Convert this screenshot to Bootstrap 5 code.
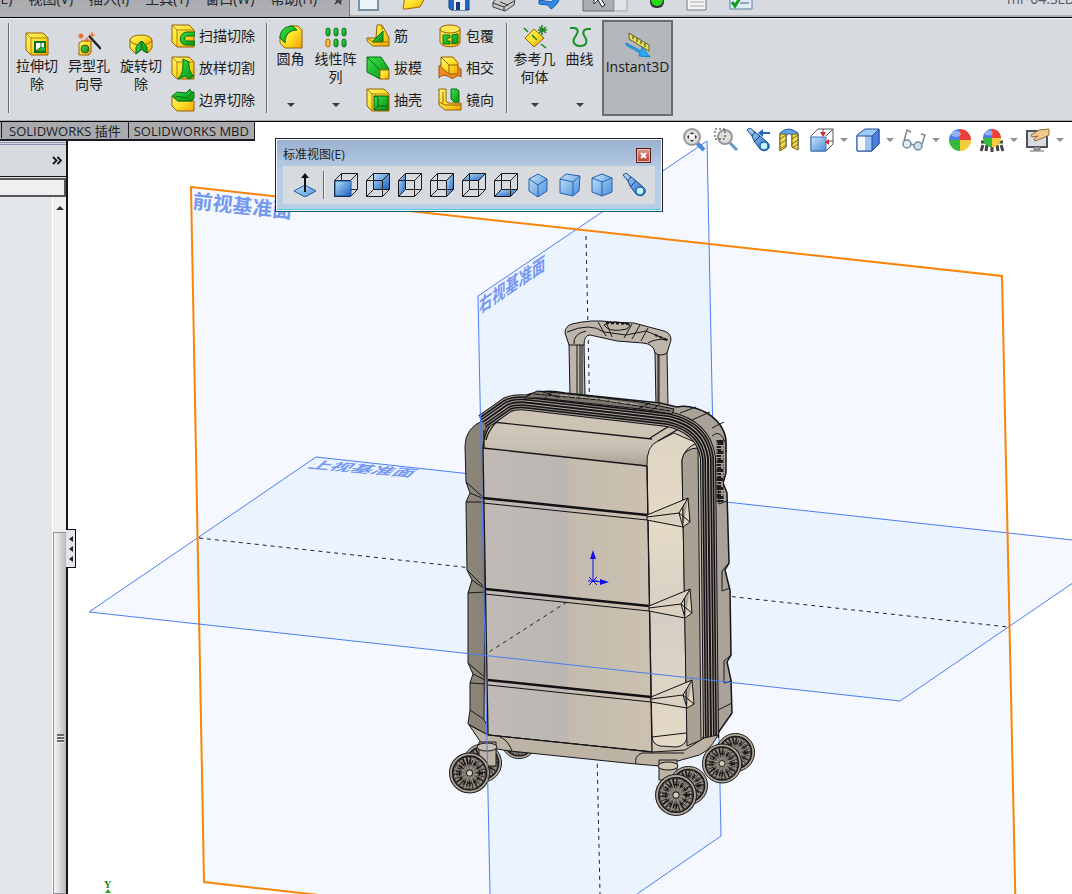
<!DOCTYPE html>
<html lang="zh-CN">
<head>
<meta charset="utf-8">
<meta name="viewport" content="width=device-width, initial-scale=1">
<title>SOLIDWORKS</title>
<link href="https://cdn.jsdelivr.net/npm/bootstrap@5.3.0/dist/css/bootstrap.min.css" rel="stylesheet">
<script src="https://cdn.jsdelivr.net/npm/bootstrap@5.3.0/dist/js/bootstrap.bundle.min.js"></script>
<style>
  body { font-family: "Open Sans", "Noto Sans CJK SC", sans-serif; font-size: 14px; line-height: 18px; color: #1c1c1c; background: #fff; }
  button { border: 0; background: none; padding: 0; color: inherit; font: inherit; line-height: inherit; }
  svg { display: block; flex: none; }
  .ico { width: 24px; height: 24px; }

  /* title bar with menus and quick access */
  .topbar { height: 18px; background: #d7dade; border-bottom: 1px solid #000; box-shadow: inset 0 -2px #b0b2b6; }
  .topbar .item { height: 32px; padding-bottom: 9px; }
  .menus { width: 350px; background: linear-gradient(#a3a4a8, #b1b3b6); border-right: 1px solid #77787b; gap: 16px; padding-right: 4px; }
  .menus a { color: #25272b; text-decoration: none; white-space: nowrap; }
  .quick { gap: 22px; padding-left: 8px; height: 32px; padding-bottom: 5px; }
  .doc-name { color: #55585c; width: 65px; white-space: nowrap; overflow: hidden; }

  /* command ribbon */
  .ribbon { height: 104px; background: #d7dade; border-bottom: 1px solid #000; box-shadow: inset 0 1px #f5f5f5, inset 0 -1px #aaa; padding: 2px 0 0 8px; }
  .rule { width: 2px; height: 90px; margin-top: 3px; background: #67696c; border-right: 1px solid #eceef0; flex: none; }
  .big { width: 52px; padding-top: 12px; }
  .big svg { margin-bottom: 1px; }
  .big.drop { width: 45px; padding-top: 5px; height: 92px; }
  .caret { width: 0; height: 0; border: 4px solid transparent; border-top-color: #3a3c3f; border-bottom: 0; }
  .big.drop .caret { margin-top: auto; margin-bottom: 5px; }
  .stack button { height: 32px; gap: 4px; white-space: nowrap; }
  .first-group { padding-left: 1px; }
  .cuts { margin: 0 11px 0 4px; }
  .instant { width: 71px; height: 96px; background: #b4b7bb; border: 2px solid #6b6e70; padding-top: 9px; }

  /* document tabs */
  .tabs { height: 19px; background: #aaabaf; border: solid #1b1c22; border-width: 0 1px 2px 0; font-size: 13px; padding-left: 1px; }
  .tabs button { border-left: 1px solid #1b1c22; padding: 0 7px; height: 16px; }
  .tabs button + button { padding: 0 5px; }

  /* feature tree side panel */
  .side { width: 68px; border-right: 2px solid #15161a; background: #e2e6eb; padding-top: 20px; flex: none; }
  .side-head { height: 35px; background: #d7dade; border-top: 3px double #8c8cae; border-bottom: 1px solid #15161a; padding-right: 4px; }
  .side input { height: 19px; margin-top: 1px; border: 2px solid #55575a; border-left: 0; background: #efefef; width: 100%; border-radius: 0; }
  .scroll { width: 14px; background: #efefef; border-left: 1px solid #fff; }
  .thumb { height: 52%; background: linear-gradient(90deg, #f4f4f4, #dcdcde 45%, #b7b8bd); border: 1px solid #8f9195; border-right: 0; padding-top: 52px; }
  .grip { width: 7px; height: 9px; background: repeating-linear-gradient(#666 0 2px, #eee 2px 3px); }
  .collapse-tab { left: 66px; top: 407px; width: 10px; height: 39px; background: #e2e6eb; border: 1px solid #111; border-left: 0; z-index: 2; }
  .collapse-tab i { border: 3px solid transparent; border-right: 4px solid #222; border-left: 0; }

  /* floating palette and heads-up bar */
  .palette { left: 207px; top: 16px; width: 388px; height: 74px; background: linear-gradient(#98b1cf, #b8cde6 45%); border: 1px solid #222; border-bottom-color: #155b70; box-shadow: inset 0 0 0 1px #f0f6fc, inset 0 -2px #52cbe4; padding: 7px 7px 6px; font-size: 12px; }
  .palette .close { width: 15px; height: 15px; background: linear-gradient(#dc9a92, #b3402f); border: 1px solid #581d16; box-shadow: inset 0 0 0 1px #e6b8b2; }
  .strip { background: #d7dade; height: 38px; padding-left: 10px; gap: 8px; margin-top: 2px; }
  .strip .rule { height: 28px; margin: 0 1px 0 -2px; }
  .hud { top: 6px; right: 0; }
  .hud button { width: 32px; gap: 6px; }
  .hud button.has-menu { width: 46px; }
  .hud .caret { border-top-color: #909090; }
  .plane-label { font: bold 20px "Noto Sans CJK SC", sans-serif; fill: #7598f2; }
  .label-right { font-size: 16px; }
  .label-top { font-size: 15px; }
  .axis-name { font: bold 10px "Liberation Serif", serif; fill: #138a13; }
</style>
</head>
<body class="vh-100 d-flex flex-column overflow-hidden">

<!-- shared gradients and icon symbols -->
<svg width="0" height="0" class="position-absolute" aria-hidden="true">
  <defs>
    <linearGradient id="gy" x1="0" y1="0" x2="1" y2="1"><stop stop-color="#fff36a"/><stop offset=".5" stop-color="#ffe12a"/><stop offset="1" stop-color="#f2a200"/></linearGradient>
    <linearGradient id="gg" x1="0" y1="0" x2="1" y2="1"><stop stop-color="#3ce04c"/><stop offset="1" stop-color="#069312"/></linearGradient>
    <linearGradient id="gb" x1="0" y1="0" x2="1" y2="1"><stop stop-color="#b5e0fb"/><stop offset="1" stop-color="#1c60bd"/></linearGradient>
    <linearGradient id="gl" x1="0" y1="0" x2="1" y2="1"><stop stop-color="#c6e4fa"/><stop offset="1" stop-color="#4b8edc"/></linearGradient>
    <symbol id="box" viewBox="0 0 24 24"><path d="M1 1h17l5 5v17H6L1 18z" fill="url(#gy)" stroke="#94600a"/><path d="M1 1l5 5h17M6 6v17" fill="none" stroke="#b57d0e"/></symbol>
    <symbol id="wire" viewBox="0 0 24 24"><path d="M.5 7.500h16v16H.5zM7.500.5h16v16h-16zM.5 7.500l7-7M16.500 7.500l7-7M16.500 23.500l7-7M.5 23.500l7-7" fill="none" stroke="#1a1a1a"/></symbol>
    <symbol id="scope" viewBox="0 0 24 24"><path d="M1 2l3-2 5 4 4 3 8 7c6 5-1 12-7 7L8 13 6 8z" fill="url(#gb)" stroke="#174a8c"/><path d="M9 4L6 8M14 8l-6 6" stroke="#0d3b7a"/><circle cx="18" cy="18" r="4" fill="#c8f3ff" stroke="#2271bb" stroke-width="1.500"/></symbol>
    <symbol id="ball" viewBox="0 0 24 24"><path d="M12 12V1a11 11 0 0 0-11 11z" fill="#4a7ee8"/><path d="M12 12V1a11 11 0 0 1 11 11z" fill="#ea4038"/><path d="M12 12H1a11 11 0 0 0 11 11z" fill="#35ba3c"/><path d="M12 12h11a11 11 0 0 1-11 11z" fill="#f2cd3c"/><ellipse cx="8" cy="6" rx="5" ry="3" fill="#fff" opacity=".4"/></symbol>
    <symbol id="hub" viewBox="-21 -21 42 42"><circle r="19.500" fill="#b0a799" stroke="#1a1a1c"/><circle r="16.500" fill="#7a746b" stroke="#17171a" stroke-width="1.500"/><circle r="11" fill="none" stroke="#1b1b1e" stroke-width="9" stroke-dasharray="1.400 1.300"/><circle r="14" fill="none" stroke="#a39c90" stroke-width="1.500" stroke-dasharray="2 2"/><circle r="10" fill="none" stroke="#101012"/><circle r="7" fill="none" stroke="#9b9488" stroke-dasharray="2 2"/><path d="M-15-5L15 5M-15 5L15-5M-5-15L5 15M-5 15L5-15M-11-11l22 22M-11 11l22-22" stroke="#979084"/><circle r="3" fill="#d6ccbc" stroke="#222"/></symbol>
  </defs>
</svg>

<header class="topbar d-flex align-items-end overflow-hidden flex-shrink-0">
  <nav class="menus item d-flex align-items-end justify-content-end flex-shrink-0 overflow-hidden" aria-label="菜单">
    <a href="#">编辑(E)</a><a href="#">视图(V)</a><a href="#">插入(I)</a><a href="#">工具(T)</a><a href="#">窗口(W)</a><a href="#">帮助(H)</a>
    <svg width="12" height="16" viewBox="0 0 14 16"><path d="M2 7h5l3-3 2 2-3 3v4l-3-3-4 3 3-4z" fill="#555" stroke="#222"/></svg>
  </nav>
  <div class="quick d-flex align-items-end flex-grow-1">
    <button aria-label="新建"><svg width="22" height="22" viewBox="0 0 22 22"><path d="M1 0h19v20H1z" fill="#e9f3fa" stroke="#7890a8" stroke-width="2"/></svg></button>
    <button aria-label="打开"><svg width="24" height="22" viewBox="0 0 24 22"><path d="M1 19L3 6h7l13 2-5 9-14 2z" fill="url(#gy)" stroke="#9a6810"/></svg></button>
    <button aria-label="保存"><svg width="22" height="22" viewBox="0 0 22 22"><path d="M1 0h20v20H3l-2-2z" fill="#2367ca" stroke="#17438a"/><path d="M6 10h11v10H6z" fill="#e9eef5"/><path d="M8 12h4v8H8z" fill="#163a7c"/></svg></button>
    <button aria-label="打印"><svg width="24" height="22" viewBox="0 0 24 22"><path d="M1 12l9-8 13 5-1 6-9 6-12-4z" fill="#c9c9c9" stroke="#444"/><path d="M1 13l11 4 10-6M8 12l8 3M12 17v4" stroke="#333" fill="none"/></svg></button>
    <button aria-label="撤消"><svg width="22" height="22" viewBox="0 0 22 22"><path d="M1 10l12 2c3-2 4-5 4-8h5c0 7-4 12-9 15l-3-4-9-1z" fill="#2d8be8" stroke="#1757a6"/></svg></button>
    <button aria-label="选择"><svg width="46" height="24" viewBox="0 0 46 24"><path d="M1 0h31v23H1z" fill="#aaadb1" stroke="#63666a"/><path d="M32 0h13v23H32z" fill="#e2e4e7" stroke="#a0a3a7"/><path d="M12 2v14l4-4 4 7 3-2-4-6h5z" fill="#fff" stroke="#222"/></svg></button>
    <button aria-label="重建模型" class="ms-n2"><svg width="14" height="24" viewBox="0 0 14 24"><rect width="14" height="20" rx="6" fill="#30343a"/><circle cx="7" cy="12" r="6" fill="#25d818"/><circle cx="6" cy="9" r="2" fill="#b9ff9e"/></svg></button>
    <button aria-label="文件属性"><svg width="21" height="22" viewBox="0 0 21 22"><path d="M1 0h19v20H1z" fill="#f4f4f4" stroke="#777"/><path d="M4 8h14M4 12h14M4 16h14" stroke="#aaa"/></svg></button>
    <button aria-label="选项"><svg width="24" height="22" viewBox="0 0 24 22"><path d="M1 0h22v19H1z" fill="#deeefa" stroke="#5c7fa0"/><path d="M11 13h9" stroke="#557"/><path d="M3 12l3 4 5-8" fill="none" stroke="#12a01a" stroke-width="3"/></svg></button>
  </div>
  <div class="doc-name item d-flex align-items-end">mr-04.SLDPRT</div>
</header>

<section class="ribbon d-flex flex-shrink-0" aria-label="特征">
  <div class="rule"></div>
  <div class="first-group d-flex">
    <button class="big d-flex flex-column align-items-center"><svg class="ico"><use href="#box"/><path d="M10 10h10v10H10z" fill="#fff" stroke="#0b6d16" stroke-width="2"/><path d="M11 19l5-4h4v4z" fill="#21b52f"/><path d="M11 19l5-4v-4" stroke="#0b6d16" fill="none"/></svg>拉伸切<br>除</button>
    <button class="big d-flex flex-column align-items-center"><svg class="ico"><path d="M2 11l3-2h9v11l-2 3H2z" fill="url(#gy)" stroke="#94600a"/><circle cx="8" cy="17" r="4" fill="url(#gg)" stroke="#654208"/><path d="M12 4l12 13" stroke="#222" stroke-width="2.500"/><path d="M1 4h6M4 1v6M2 2l4 4M6 2L2 6M12 3h6M15 0v6M7 8h5M10 5v5" stroke="#e85a10"/></svg>异型孔<br>向导</button>
    <button class="big d-flex flex-column align-items-center"><svg class="ico"><path d="M1 8v8l6 6 6-11 6 10 4-5V8z" fill="url(#gy)" stroke="#94600a"/><ellipse cx="12" cy="8" rx="11" ry="5" fill="url(#gy)" stroke="#94600a"/><path d="M7 15l5-6v9l-5 4zM13 9l5 6v6l-5-3z" fill="url(#gg)" stroke="#09611a"/></svg>旋转切<br>除</button>
  </div>
  <div class="stack cuts d-flex flex-column">
    <button class="d-flex align-items-center"><svg class="ico"><use href="#box"/><path d="M24 8h-8c-9 1-9 13 0 13h8v-4h-8c-3 0-3-5 0-5h8z" fill="url(#gg)" stroke="#086d16"/></svg>扫描切除</button>
    <button class="d-flex align-items-center"><svg class="ico"><use href="#box"/><path d="M12 3l6 3c0 7 1 11 5 14l-5 3-4-3-7 3c5-6 5-10 5-20z" fill="url(#gg)" stroke="#086d16"/></svg>放样切割</button>
    <button class="d-flex align-items-center"><svg class="ico"><path d="M1 8l6 5h16v10H6l-5-5z" fill="url(#gy)" stroke="#94600a"/><path d="M1 8l5-4 9 1 4-4 1 3h3v6l-2 3H7z" fill="url(#gg)" stroke="#086d16"/><path d="M4 8l12 2 6-6" stroke="#086d16" fill="none"/></svg>边界切除</button>
  </div>
  <div class="rule"></div>
  <button class="big drop d-flex flex-column align-items-center"><svg class="ico"><path d="M1 11L11 1h8l4 4v18H6l-5-5z" fill="url(#gy)" stroke="#94600a"/><path d="M1 13C1 5 6 1 14 1l4 4C11 5 6 9 6 18z" fill="url(#gg)" stroke="#087016"/></svg>圆角<span class="caret"></span></button>
  <button class="big drop d-flex flex-column align-items-center"><svg class="ico"><g fill="url(#gg)" stroke="#08751c"><rect x="2" y="3" width="4" height="8" rx="2"/><rect x="10" y="3" width="4" height="8" rx="2"/><rect x="18" y="3" width="4" height="8" rx="2"/><rect x="10" y="14" width="4" height="8" rx="2"/><rect x="18" y="14" width="4" height="8" rx="2"/></g><rect x="2" y="14" width="4" height="8" rx="2" fill="#ffc634" stroke="#a96300"/></svg>线性阵<br>列<span class="caret"></span></button>
  <div class="stack d-flex flex-column ms-2 me-3">
    <button class="d-flex align-items-center"><svg class="ico"><path d="M11 1h5l7 13v8H7l-6-5v-3h9z" fill="url(#gy)" stroke="#94600a"/><path d="M6 18L17 7v11z" fill="url(#gg)" stroke="#086d16"/><path d="M16 1v5M1 14l6 4h16" fill="none" stroke="#a26d0c"/></svg>筋</button>
    <button class="d-flex align-items-center"><svg class="ico"><path d="M1 1h14l8 12-9 10-13-7z" fill="url(#gg)" stroke="#086d16"/><path d="M1 1l13 13" stroke="#086d16"/><path d="M14 14h9v9h-9z" fill="url(#gy)" stroke="#94600a"/></svg>拔模</button>
    <button class="d-flex align-items-center"><svg class="ico"><use href="#box"/><path d="M8 8h14v14H8z" fill="url(#gg)" stroke="#085d13"/><path d="M8 8l4 1v9l-4 4M12 18h10" fill="none" stroke="#085d13"/></svg>抽壳</button>
  </div>
  <div class="stack d-flex flex-column me-2 pe-1">
    <button class="d-flex align-items-center"><svg class="ico"><path d="M2 5v14c3 5 18 5 20 0V5z" fill="url(#gy)" stroke="#94600a"/><ellipse cx="12" cy="5" rx="10" ry="4" fill="#ffe95a" stroke="#94600a"/><path d="M5 11h7v3H9v3h3v3H5zM14 11l6-1v9l-6 1z" fill="url(#gg)" stroke="#086d16"/></svg>包覆</button>
    <button class="d-flex align-items-center"><svg class="ico"><path d="M1 10c5-4 8 6 12 2s6-2 10 1v8c-4-4-7 3-10 1S5 17 1 22z" fill="#f48a27" stroke="#9c4d0b"/><path d="M3 1h12l5 6v11h-9l-8-7z" fill="url(#gy)" stroke="#94600a"/><path d="M3 1l8 8h9M11 9v9" fill="none" stroke="#94600a"/></svg>相交</button>
    <button class="d-flex align-items-center"><svg class="ico"><path d="M1 1h7v12l2 2h13v7H7l-6-5z" fill="url(#gy)" stroke="#94600a"/><path d="M13 1h6l2 2v11h-5l-3-3z" fill="url(#gg)" stroke="#086d16"/><path d="M1 14l6 3h16M5 4v11" fill="none" stroke="#94600a"/></svg>镜向</button>
  </div>
  <div class="rule"></div>
  <button class="big drop d-flex flex-column align-items-center ms-1"><svg class="ico"><path d="M11 4l10 9-10 9-9-9z" fill="url(#gy)" stroke="#94600a"/><path d="M1 3l4 4M9 10l5 5M18 19l5 4M15 5h9M19 0v10M16 2l7 6M23 2l-7 6" stroke="#13841f" stroke-width="1.500"/></svg>参考几<br>何体<span class="caret"></span></button>
  <button class="big drop d-flex flex-column align-items-center"><svg class="ico"><path d="M2 3h5c5 2 2 6 0 9-4 6 1 9 5 9 8 0 7-6 5-9-3-4-2-8 3-8h3" fill="none" stroke="#159128" stroke-width="2"/></svg>曲线<span class="caret"></span></button>
  <button class="instant d-flex flex-column align-items-center"><svg width="26" height="27" viewBox="0 0 26 27"><path d="M4 2l20 12v6L4 8z" fill="#e5df52" stroke="#666039"/><path d="M8 5v3M12 7v4M16 10v3M20 12v4" stroke="#333"/><path d="M1 12l15 8 1-4 8 10-11-1 1-3L1 14z" fill="#2da8f3" stroke="#1682c6"/></svg>Instant3D</button>
</section>

<main class="d-flex flex-grow-1 position-relative overflow-hidden">
  <div class="tabs d-flex position-absolute top-0 start-0 z-3">
    <button>SOLIDWORKS 插件</button><button>SOLIDWORKS MBD</button>
  </div>

  <aside class="side d-flex flex-column">
    <div class="side-head d-flex align-items-center justify-content-end"><button aria-label="展开"><svg width="10" height="9" viewBox="0 0 11 10"><path d="M1 1l4 4-4 4M6 1l4 4-4 4" fill="none" stroke="#111" stroke-width="2"/></svg></button></div>
    <input type="text" aria-label="过滤">
    <div class="d-flex justify-content-end flex-grow-1">
      <div class="scroll d-flex flex-column align-items-center">
        <svg width="8" height="6" viewBox="0 0 8 6" class="mt-2 mb-auto"><path d="M0 5l4-4 4 4z" fill="#333"/></svg>
        <div class="thumb w-100 d-flex align-items-center justify-content-center"><div class="grip"></div></div>
      </div>
    </div>
  </aside>
  <button class="collapse-tab position-absolute d-flex flex-column align-items-center justify-content-center gap-1" aria-label="收起面板"><i></i><i></i><i></i></button>

  <div class="flex-grow-1 position-relative overflow-hidden">
    <svg class="w-100 h-100" viewBox="68 122 1004 772" preserveAspectRatio="xMinYMin slice" role="img" aria-label="行李箱模型">
      <defs>
        <linearGradient id="front"><stop stop-color="#c1bab6"/><stop offset=".5" stop-color="#bbb6b2"/><stop offset=".51" stop-color="#c4bbae"/><stop offset="1" stop-color="#ccc1b0"/></linearGradient>
        <linearGradient id="bevel" x1="0" y1="0" x2="0" y2="1"><stop stop-color="#d3cabe"/><stop offset=".6" stop-color="#c8bfb3"/><stop offset="1" stop-color="#a9a094"/></linearGradient>
        <linearGradient id="pillar" x1="0" y1="0" x2="0" y2="1"><stop stop-color="#ded4c2"/><stop offset=".3" stop-color="#e4dac6"/><stop offset=".6" stop-color="#d6cec4"/><stop offset="1" stop-color="#e5dac7"/></linearGradient>
        <linearGradient id="flank"><stop stop-color="#8d867b"/><stop offset="1" stop-color="#766f65"/></linearGradient>
        <path id="zip" d="M483 422L507 405Q515 401 530 403L668 419Q704 427 708 458L711 738"/>
      </defs>
      <!-- reference planes -->
      <g fill="#3f90ff" fill-opacity=".05">
        <path d="M191 187L1002 276 1017 974 204 882z"/>
        <path d="M478 296L707 141 721 836 491 995z"/>
        <path d="M89 612L316 457 1127 546 900 701z"/>
      </g>
      <g fill="none" stroke="#4c7df2">
        <path d="M478 296L707 141 721 836 491 995M89 612L316 457 1127 546 900 701"/>
        <path d="M191 187L1002 276 1017 974 204 882z" stroke="#f98407" stroke-width="2"/>
      </g>
      <g fill="none" stroke="#222" stroke-dasharray="4 4"><path d="M586 236L600 894M199 538L1008 627"/></g>
      <text class="plane-label" transform="translate(192 208) rotate(6)">前视基准面</text>
      <text class="plane-label label-right" transform="translate(479 314) rotate(-34) skewX(-34)">右视基准面</text>
      <text class="plane-label label-top" transform="translate(307 468) rotate(49) skewY(-44)">上视基准面</text>

      <!-- telescopic handle -->
      <g stroke="#15151a" fill="#bdb5aa">
        <path d="M569 344h15l1 52h-15zM655 352h12l1 54h-12z"/>
        <path d="M577 345v50M580 345v50M582 345v50M658 353v50M659 353v52" fill="none"/>
        <path d="M565 333Q565 326 572 324Q592 319 612 322L634 323 664 331Q671 333 671 340L667 353Q661 357 655 353Q654 344 643 343L617 341 590 335Q584 335 584 345H569z"/>
        <path d="M567 332Q590 322 604 332L626 335 646 331 668 340M574 344q-1-10 12-13M598 322l8 14M606 322l6 15M632 324l-8 14M640 325l-8 14M648 328l-7 13M604 325q10-6 26 0l-3 4q-14 3-20-1zM648 343q8-5 19-3" fill="none"/>
        <path d="M606 323L630 324M655 335l12 5" fill="none" stroke-width="2" stroke-dasharray="3 2"/>
      </g>

      <!-- wheels behind the shell -->
      <use href="#hub" x="500" y="722" width="38" height="38"/>
      <use href="#hub" x="715" y="731" width="41" height="43"/>
      <use href="#hub" x="701" y="742" width="42" height="43"/>
      <use href="#hub" x="462" y="742" width="41" height="42"/>

      <!-- rear shell -->
      <path d="M480 424Q500 404 530 394Q545 389 565 393L660 403 677 407Q690 404 707 413Q724 424 726 440V473L723 483 727 493 729 563 725 570 730 590 731 655 727 662 731 680 732 713 718 733 700 750 560 700z" fill="#aaa299" stroke="#16161a" stroke-width="1.500"/>
      <path d="M729 563l-7 8v20l8-3M731 655l-7 6v22l8-2M723 483l-5 5 1 16 8-3M692 420l18-8M680 413l16-6M712 428l12-6M718 710l14-7" fill="none" stroke="#16161a"/>
      <path d="M712 436q8-8 14 8v8" fill="none" stroke="#16161a"/>
      <path d="M720 440v62" stroke="#1b1b20" stroke-width="7" stroke-dasharray="5 1 2 1"/>
      <path d="M722 446v50" stroke="#99928a" stroke-width="2" stroke-dasharray="5 4"/>
      <path d="M717 442v60" stroke="#99928a" stroke-dasharray="3 5"/>

      <!-- left flank -->
      <path d="M484 420Q465 428 465 446L466 482 470 493 466 502 467 570 472 580 468 593 468 663 473 674 470 683 470 710 468 724 488 735 560 740 540 430z" fill="url(#flank)" stroke="#16161a"/>
      <path d="M466 482L484 498M470 493L484 499M466 502H484M467 570L485 588M472 580L485 589M468 593L485 592M468 663L487 679M473 674L487 681M470 683L487 684M470 710L488 722" fill="none" stroke="#16161a"/>

      <!-- top shell and front panel -->
      <path d="M486 425Q495 408 515 404L672 423Q700 432 701 452L704 735Q700 748 688 750L660 758 500 745 484 720z" fill="#cdc3b5" stroke="#16161a"/>
      <path d="M483 448Q484 426 496 421L652 438Q646 446 647 466z" fill="url(#bevel)"/>
      <path d="M483 448L647 466 651 752 488 735z" fill="url(#front)"/>
      <path d="M647 466Q646 446 658 441L674 433 697 443Q684 448 682 460L687 737Q686 746 676 747L660 746Q652 744 652 736z" fill="url(#pillar)" stroke="#16161a"/>
      <path d="M682 460Q684 448 698 448L701 740 687 746z" fill="#aaa195" stroke="#16161a"/>
      <path d="M483 448Q485 418 515 407M486 440Q490 424 510 411M493 422L652 439M483 448L647 466M647 466L652 752M483 448L488 735M650 438L674 423M658 441L682 427M697 443L701 438M488 735L652 752M484 430v18" fill="none" stroke="#16161a" stroke-width="1.300"/>

      <!-- zipper band: nested strokes give parallel seams -->
      <g fill="none" stroke-linejoin="round">
        <use href="#zip" stroke="#111116" stroke-width="16"/>
        <use href="#zip" stroke="#aca498" stroke-width="14"/>
        <use href="#zip" stroke="#111116" stroke-width="12"/>
        <use href="#zip" stroke="#8c857b" stroke-width="9"/>
        <use href="#zip" stroke="#111116" stroke-width="7"/>
        <use href="#zip" stroke="#b4ac9f" stroke-width="4"/>
        <use href="#zip" stroke="#15151a" stroke-width="2"/>
      </g>
      <path d="M524 398L537 391 560 393 640 402 674 409 672 414 640 409 540 398z" fill="#7c766e" stroke="#111"/>
      <path d="M534 394L600 400 670 411M540 391l20 7M552 392l-8 7M650 403l-12 6M660 404l-10 7" fill="none" stroke="#111" stroke-dasharray="6 1"/>
      <path d="M560 395L600 399 640 405" fill="none" stroke="#b8b0a4" stroke-dasharray="8 2"/>

      <!-- ribs -->
      <g fill="none" stroke="#111115">
        <path d="M483 498L647 515M485 589L649 606M488 680L651 697" stroke-width="2.500"/>
        <path d="M483 503L647 520M485 594L649 611M488 685L651 702"/>
      </g>
      <g fill="#dcd0be" stroke="#111115" stroke-linejoin="round">
        <path d="M647 515L688 498 690 522 683 527 647 520zM688 498L679 513 683 527M679 513L647 517M679 513l11 9"/>
        <path d="M649 606L690 589 692 613 685 618 649 611zM690 589L681 604 685 618M681 604L649 608M681 604l11 9"/>
        <path d="M651 697L692 680 694 704 687 708 651 702zM692 680L683 695 687 708M683 695L651 699M683 695l11 9"/>
      </g>
      <path d="M652 737L686 733" stroke="#111"/>

      <!-- lower shell and castors -->
      <path d="M469 725L488 735 652 752 685 750 704 738 718 735Q708 755 692 757L660 766 636 764 510 751 484 747Z" fill="#bdb3a5" stroke="#16161a"/>
      <path d="M488 735L652 752M500 737q8 3 12 14M636 764q-2-8 6-11h42" fill="none" stroke="#16161a"/>
      <path d="M479 742h17v24h-17zM659 760h18v20h-18z" fill="#bdb3a5" stroke="#16161a"/>
      <ellipse cx="487" cy="747" rx="10" ry="4" fill="#cabfb0" stroke="#16161a"/>
      <ellipse cx="668" cy="766" rx="10" ry="4" fill="#d0c5b5" stroke="#16161a"/>
      <use href="#hub" x="448" y="751" width="43" height="44"/>
      <use href="#hub" x="668" y="764" width="41" height="43"/>
      <use href="#hub" x="654" y="773" width="44" height="44"/>

      <!-- plane edges in front of the model, origin marker -->
      <path d="M478 296L490 894M89 612L900 701" fill="none" stroke="#4c7df2"/>
      <path d="M567 602L489 652" stroke="#222" stroke-dasharray="4 4"/>
      <path d="M593 581V556M593 581l9 1M589 577l8 8M597 577l-8 8M588 581h10" stroke="#1010f0"/>
      <path d="M590 559l3-9 3 9zM600 579l9 3-9 3z" fill="#1010f0"/>
      <text class="axis-name" x="104" y="888">Y</text>
      <path d="M105 893l3-4 3 4z" fill="#28a828"/>
    </svg>

    <div class="hud position-absolute d-flex align-items-center">
      <button aria-label="整屏显示全图"><svg class="ico"><path d="M15 15l7 7" stroke="#4a88d6" stroke-width="4"/><circle cx="10" cy="9" r="8" fill="#ddd" stroke="#999" stroke-width="2"/><path d="M10 4l-2 2h4zM10 14l-2-2h4zM5 9l2-2v4zM15 9l-2-2v4z" fill="#333"/><path d="M8 7h4v4H8z" fill="#f7f7f7"/></svg></button>
      <button aria-label="局部放大"><svg class="ico"><path d="M15 14l8 8" stroke="#6497ce" stroke-width="3"/><circle cx="11" cy="9" r="7" fill="#ddd" stroke="#999" stroke-width="2"/><path d="M1 1h10v10H1z" fill="none" stroke="#333" stroke-dasharray="2 2"/></svg></button>
      <button aria-label="上一视图"><svg class="ico"><use href="#scope"/><path d="M24 5h-9" stroke="#2466b8" stroke-width="2"/><path d="M17 1l-5 4 5 4z" fill="#2466b8"/></svg></button>
      <button aria-label="剖面视图"><svg class="ico"><path d="M2 5q8-8 18 0v16l-6-2V7q-3-3-6 0v12l-6 3z" fill="#5fa6e8" stroke="#275c9b"/><path d="M2 6h6v13l-6 4zM14 6h6v16l-6-3z" fill="#f5dc4f" stroke="#725d16"/><path d="M2 11l6-4M2 16l6-4M2 21l6-4M14 11l6-4M14 16l6-4M14 20l6-4" stroke="#806d16"/></svg></button>
      <button class="has-menu d-flex align-items-center" aria-label="视图定向"><svg class="ico"><path d="M1 8l7-7h15v15l-7 7H1z" fill="#fff" stroke="#555"/><path d="M1 9h15v14H1z" fill="url(#gl)" stroke="#3677c2"/><path d="M16 8l7-7M13 1v5M23 13h-5" stroke="#555"/><path d="M10 4h6l-3 5zM19 11v6l-4-3z" fill="#d32a27"/></svg><span class="caret"></span></button>
      <button class="has-menu d-flex align-items-center" aria-label="显示样式"><svg class="ico"><path d="M1 7l8-6h14v15l-7 7H1z" fill="#9ccbf5" stroke="#274f9a"/><path d="M1 8h8v15H1z" fill="#f5f9fe"/><path d="M9 8h7v15H9z" fill="#9ac5f2"/><path d="M16 8l7-7v15l-7 7z" fill="#4a7fe0" stroke="#274f9a"/><path d="M1 8h15M1 8v15h15" fill="none" stroke="#274f9a"/></svg><span class="caret"></span></button>
      <button class="has-menu d-flex align-items-center" aria-label="隐藏/显示项目"><svg class="ico"><circle cx="5" cy="16" r="4" fill="#e2f0fa" stroke="#7a8790" stroke-width="1.500"/><circle cx="16" cy="18" r="4" fill="#c7e0f5" stroke="#7a8790" stroke-width="1.500"/><path d="M2 13L5 2l4 2M20 16l3-9-4-1M9 16l3 1" fill="none" stroke="#7a8790" stroke-width="1.500"/></svg><span class="caret"></span></button>
      <button aria-label="编辑外观"><svg class="ico"><use href="#ball"/></svg></button>
      <button class="has-menu d-flex align-items-center" aria-label="应用布景"><svg class="ico"><path d="M1 23l2-6M6 23l1-6M12 24v-5M18 23l-1-6M23 23l-2-6M1 14h22" stroke="#444" stroke-width="3"/><use href="#ball" x="2" width="20" height="20"/></svg><span class="caret"></span></button>
      <button class="has-menu d-flex align-items-center" aria-label="视图设定"><svg class="ico"><path d="M1 3h20v16H1z" fill="#d9dde1" stroke="#4d535a" stroke-width="2"/><path d="M8 19h6v3H8zM4 23h14" fill="#aaa" stroke="#666"/><path d="M5 7l8-5 10-1v6l-6 3-8 3-1-2 4-3-6 1z" fill="#f2c98e" stroke="#936a37"/></svg><span class="caret"></span></button>
    </div>

    <div class="palette position-absolute d-flex flex-column" role="toolbar" aria-label="标准视图">
      <div class="d-flex justify-content-between align-items-center">
        <span>标准视图(E)</span>
        <button class="close d-flex align-items-center justify-content-center me-1" aria-label="关闭"><svg width="7" height="7" viewBox="0 0 7 7"><path d="M1 1l5 5M6 1L1 6" stroke="#fff" stroke-width="2"/></svg></button>
      </div>
      <div class="strip d-flex align-items-center">
        <button aria-label="正视于"><svg class="ico"><path d="M1 18l11-6 11 6-11 6z" fill="url(#gl)" stroke="#255998"/><path d="M12 19V4" stroke="#111" stroke-width="2"/><path d="M8 5l4-5 4 5z" fill="#111"/></svg></button>
        <span class="rule"></span>
        <button aria-label="前视"><svg class="ico"><use href="#wire"/><path d="M1 8h16v15H1z" fill="url(#gb)" stroke="#174f9b"/></svg></button>
        <button aria-label="后视"><svg class="ico"><path d="M7 1h16v15H7z" fill="url(#gb)"/><use href="#wire"/></svg></button>
        <button aria-label="左视"><svg class="ico"><path d="M1 8l6-7v15l-6 7z" fill="url(#gb)"/><use href="#wire"/></svg></button>
        <button aria-label="右视"><svg class="ico"><path d="M17 8l6-7v15l-6 7z" fill="url(#gb)"/><use href="#wire"/></svg></button>
        <button aria-label="上视"><svg class="ico"><path d="M1 8l6-7h16l-6 7z" fill="url(#gb)"/><use href="#wire"/></svg></button>
        <button aria-label="下视"><svg class="ico"><path d="M1 23l6-7h16l-6 7z" fill="url(#gb)"/><use href="#wire"/></svg></button>
        <button aria-label="等轴测"><svg class="ico"><path d="M3 6l9-5 9 5v12l-9 6-9-6z" fill="url(#gl)" stroke="#2460ad"/><path d="M3 6l9 6 9-6M12 12v12" fill="none" stroke="#2460ad"/></svg></button>
        <button aria-label="左右二等角轴测"><svg class="ico"><path d="M2 6l6-5 14 2-1 15-6 5-13-3z" fill="url(#gl)" stroke="#2460ad"/><path d="M2 6l13 3 7-6M15 9v14" fill="none" stroke="#2460ad"/></svg></button>
        <button aria-label="上下二等角轴测"><svg class="ico"><path d="M2 5l10-4 10 4v14l-10 4-10-4z" fill="url(#gl)" stroke="#2460ad"/><path d="M2 5l10 4 10-4M12 9v14" fill="none" stroke="#2460ad"/></svg></button>
        <button aria-label="视图定向"><svg class="ico"><use href="#scope"/></svg></button>
      </div>
    </div>
  </div>
</main>
</body>
</html>
